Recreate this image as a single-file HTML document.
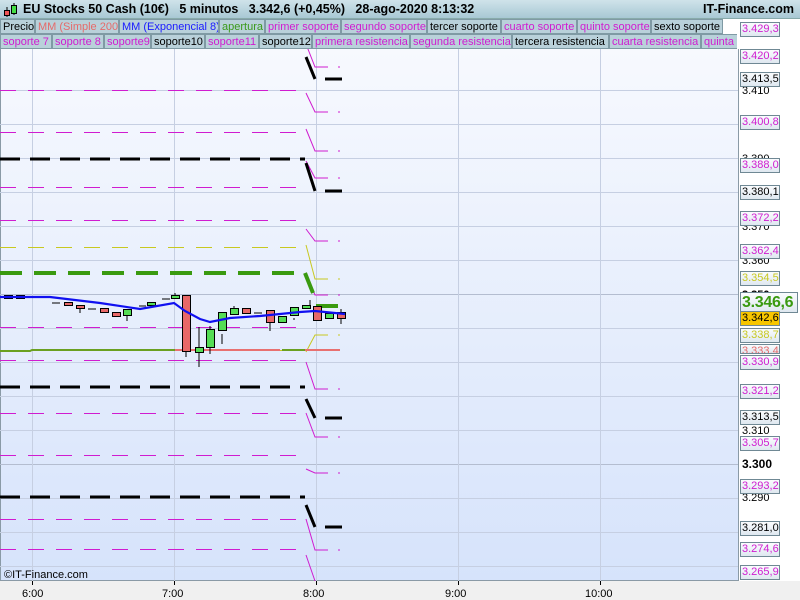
<!DOCTYPE html>
<html><head><meta charset="utf-8"><style>
*{margin:0;padding:0;box-sizing:border-box}
body{width:800px;height:600px;overflow:hidden;position:relative;font-family:"Liberation Sans",sans-serif;background:#fff}
#title{position:absolute;left:0;top:0;width:800px;height:19px;background:linear-gradient(#cfe3ea,#a8c8d4);border-bottom:1px solid #8aa;font-weight:bold;font-size:12.5px;line-height:19px}
.row{position:absolute;left:0;height:15px;font-size:11px;line-height:14px}
.c{position:absolute;top:0;height:15px;background:#b9d1da;border:1px solid #7f9aa4;padding-left:2px;white-space:nowrap;overflow:hidden}
.m{color:#d01cd0}.k{color:#000}
.lab{position:absolute;left:740px;width:40px;height:15px;border:1px solid #6f8894;background:linear-gradient(#fafcfe,#dfe8f0);font-size:11px;line-height:13px;padding-left:1px;white-space:nowrap}
.ax{position:absolute;left:742px;font-size:11px;line-height:12px;color:#000}
</style></head><body>
<div id="title"><svg style="position:absolute;left:3px;top:2px" width="16" height="16"><line x1="4" y1="5" x2="4" y2="15" stroke="#000"/><rect x="1.5" y="8.5" width="5" height="5" fill="#e55" stroke="#000"/><line x1="11" y1="1" x2="11" y2="13" stroke="#000"/><rect x="8.5" y="3.5" width="5" height="8" fill="#4d4" stroke="#000"/></svg><span style="position:absolute;left:23px">EU Stocks 50 Cash (10€)&nbsp;&nbsp;&nbsp;5 minutos&nbsp;&nbsp;&nbsp;3.342,6 (+0,45%)&nbsp;&nbsp;&nbsp;28-ago-2020 8:13:32</span><span style="position:absolute;right:6px">IT-Finance.com</span></div>
<div class="row" style="top:19px">
<div class="c k" style="left:0;width:35px">Precio</div>
<div class="c" style="left:35px;width:84px;color:#e56a6a">MM (Simple 200)</div>
<div class="c" style="left:119px;width:100px;color:#1a1aff">MM (Exponencial 8)</div>
<div class="c" style="left:219px;width:46px;color:#3a9a1a">apertura</div>
<div class="c m" style="left:265px;width:76px">primer soporte</div>
<div class="c m" style="left:341px;width:86px">segundo soporte</div>
<div class="c k" style="left:427px;width:74px">tercer soporte</div>
<div class="c m" style="left:501px;width:76px">cuarto soporte</div>
<div class="c m" style="left:577px;width:74px">quinto soporte</div>
<div class="c k" style="left:651px;width:72px">sexto soporte</div>
</div>
<div class="row" style="top:34px;width:737px;overflow:hidden">
<div class="c m" style="left:0;width:52px">soporte 7</div>
<div class="c m" style="left:52px;width:52px">soporte 8</div>
<div class="c m" style="left:104px;width:47px">soporte9</div>
<div class="c k" style="left:151px;width:54px">soporte10</div>
<div class="c m" style="left:205px;width:54px">soporte11</div>
<div class="c k" style="left:259px;width:53px">soporte12</div>
<div class="c m" style="left:312px;width:98px">primera resistencia</div>
<div class="c m" style="left:410px;width:102px">segunda resistencia</div>
<div class="c k" style="left:512px;width:97px">tercera resistencia</div>
<div class="c m" style="left:609px;width:92px">cuarta resistencia</div>
<div class="c m" style="left:701px;width:40px">quinta resistencia</div>
</div>
<svg style="position:absolute;left:0;top:49px" width="800" height="551">
<defs><linearGradient id="bg" x1="0" y1="0" x2="0" y2="1"><stop offset="0" stop-color="#f7f9fe"/><stop offset="1" stop-color="#d6e3fb"/></linearGradient></defs>
<rect x="0" y="0" width="738" height="532" fill="url(#bg)"/>
<rect x="738" y="0" width="62" height="532" fill="#fff"/>
<line x1="738.5" y1="0" x2="738.5" y2="532" stroke="#8a9aa6"/>
<line x1="0.5" y1="0" x2="0.5" y2="532" stroke="#8a9aa6"/>
<rect x="0" y="532" width="800" height="19" fill="#f0f0f0"/>
<line x1="0" y1="531.5" x2="738" y2="531.5" stroke="#8a9aa6"/>
<g stroke="#c6cfe2" stroke-width="1">
<line x1="0" y1="41.5" x2="738" y2="41.5"/><line x1="0" y1="75.5" x2="738" y2="75.5"/><line x1="0" y1="109.5" x2="738" y2="109.5"/><line x1="0" y1="143.5" x2="738" y2="143.5"/><line x1="0" y1="177.5" x2="738" y2="177.5"/><line x1="0" y1="211.5" x2="738" y2="211.5"/><line x1="0" y1="245.5" x2="738" y2="245.5" stroke="#b4bdd0"/><line x1="0" y1="279.5" x2="738" y2="279.5"/><line x1="0" y1="313.5" x2="738" y2="313.5"/><line x1="0" y1="347.5" x2="738" y2="347.5"/><line x1="0" y1="381.5" x2="738" y2="381.5"/><line x1="0" y1="415.5" x2="738" y2="415.5" stroke="#b4bdd0"/><line x1="0" y1="449.5" x2="738" y2="449.5"/><line x1="0" y1="483.5" x2="738" y2="483.5"/><line x1="0" y1="517.5" x2="738" y2="517.5"/>
<line x1="32.5" y1="0" x2="32.5" y2="532"/><line x1="174.5" y1="0" x2="174.5" y2="532"/><line x1="316.5" y1="0" x2="316.5" y2="532"/><line x1="458.5" y1="0" x2="458.5" y2="532"/><line x1="600.5" y1="0" x2="600.5" y2="532"/>
</g>
<g fill="none" stroke-width="1">
<g stroke="#d01cd0" stroke-dasharray="16,12">
<path d="M0 41.5H300"/><path d="M0 83.5H300"/><path d="M0 138.5H300"/><path d="M0 171.5H300"/><path d="M0 278.5H300"/><path d="M0 311.5H300"/><path d="M0 364.5H300"/><path d="M0 406.5H300"/><path d="M0 470.5H300"/><path d="M0 500.5H300"/>
</g>
<g stroke="#c8c820" stroke-dasharray="16,12"><path d="M0 198.5H300"/><path d="M0 301.5H300"/></g>
<g stroke="#d01cd0"><path d="M306 -5L315 18H328M338 18H340"/><path d="M306 44L315 63H328M338 63H340"/><path d="M306 80L315 102H328M338 102H340"/><path d="M306 112L315 129H328M338 129H340"/><path d="M306 180L315 192H328M338 192H340"/><path d="M306 226L315 246H328M338 246H340"/><path d="M306 313L315 340H328M338 340H340"/><path d="M306 364L315 388H328M338 388H340"/><path d="M306 420L315 424H328M338 424H340"/><path d="M306 470L315 501H328M338 501H340"/><path d="M306 506L315 532"/></g>
<g stroke="#c8c820"><path d="M306 196L315 230H328M338 230H340"/><path d="M306 303L315 286H328M338 286H340"/></g>
</g>
<g stroke="#000" stroke-width="3" fill="none">
<path d="M0 110H305" stroke-dasharray="20,10"/><path d="M306 8L315 30M325 30H342"/>
<path d="M306 114L315 142M325 142H342"/>
<path d="M0 338H305" stroke-dasharray="20,10"/><path d="M306 350L315 369M325 369H342"/>
<path d="M0 448H305" stroke-dasharray="20,10"/><path d="M306 456L315 478M325 478H342"/>
</g>
<path d="M0 224H305" stroke="#3a9a10" stroke-width="4" stroke-dasharray="22,12" fill="none"/>
<path d="M305 224L313 244M316 257H338" stroke="#3a9a10" stroke-width="4" fill="none"/>
<path d="M0 302H30L32 301H175" stroke="#6aa020" stroke-width="2" fill="none"/>
<path d="M175 301H280" stroke="#e87070" stroke-width="2"/><path d="M282 301H305" stroke="#6aa020" stroke-width="2"/><path d="M305 301H340" stroke="#e87070" stroke-width="2"/>
<g stroke="#000" stroke-width="1">
<path d="M80 260v4M127 263v9M151 255v4M175 244v4M186 300v8M199 278v40M210 277v28M222 285v10M234 257v3M246 260v0M270 273v9M294 269v2M310 251v5M317 265v6M341 260v15"/>
<path d="M52 254H60M88 260H96M139 257H146M162 250H170M254 264H262"/>
</g>
<g stroke="#000" stroke-width="1">
<rect x="4.5" y="246.5" width="8" height="3" fill="#5577cc"/><rect x="16.5" y="246.5" width="8" height="3" fill="#5577cc"/>
<rect x="64.5" y="253.5" width="8" height="3" fill="#e86868"/><rect x="76.5" y="256.5" width="8" height="3" fill="#e86868"/>
<rect x="100.5" y="259.5" width="8" height="4" fill="#e86868"/><rect x="112.5" y="263.5" width="8" height="4" fill="#e86868"/>
<rect x="123.5" y="260.5" width="8" height="6" fill="#55dd55"/><rect x="147.5" y="253.5" width="8" height="3" fill="#55dd55"/>
<rect x="171.5" y="246.5" width="8" height="3" fill="#55dd55"/><rect x="182.5" y="246.5" width="8" height="56" fill="#e86868"/>
<rect x="195.5" y="298.5" width="8" height="5" fill="#55dd55"/><rect x="206.5" y="280.5" width="8" height="18" fill="#55dd55"/>
<rect x="218.5" y="263.5" width="8" height="18" fill="#55dd55"/><rect x="230.5" y="259.5" width="8" height="6" fill="#55dd55"/>
<rect x="242.5" y="259.5" width="8" height="5" fill="#e86868"/><rect x="266.5" y="261.5" width="8" height="12" fill="#e86868"/>
<rect x="278.5" y="267.5" width="8" height="6" fill="#55dd55"/><rect x="290.5" y="258.5" width="8" height="8" fill="#55dd55"/>
<rect x="302.5" y="256.5" width="8" height="3" fill="#55dd55"/><rect x="313.5" y="257.5" width="8" height="14" fill="#e86868"/>
<rect x="325.5" y="264.5" width="8" height="5" fill="#55dd55"/><rect x="337.5" y="263.5" width="8" height="6" fill="#e86868"/>
</g>
<path d="M0 248L50 248L100 254L140 260L174 254L185 262L200 270L210 273L230 269L260 267L300 263L315 262L345 265" stroke="#1010f0" stroke-width="2.2" fill="none"/>
<text x="4" y="529" font-size="11" fill="#000">©IT-Finance.com</text>
<g font-size="11" fill="#000"><text x="22" y="548">6:00</text><text x="162" y="548">7:00</text><text x="303" y="548">8:00</text><text x="445" y="548">9:00</text><text x="585" y="548">10:00</text></g>
<g stroke="#000"><path d="M32.5 532v4M174.5 532v4M316.5 532v4M458.5 532v4M600.5 532v4"/></g>
</svg>
<div class="ax" style="top:85px">3.410</div>
<div class="ax" style="top:153px">3.390</div>
<div class="ax" style="top:221px">3.370</div>
<div class="ax" style="top:255px">3.360</div>
<div class="ax" style="top:289px;font-weight:bold">3.350</div>
<div class="ax" style="top:425px">3.310</div>
<div class="ax" style="top:458px;font-weight:bold;font-size:12px">3.300</div>
<div class="ax" style="top:492px">3.290</div>
<div class="lab m" style="top:22px">3.429,3</div>
<div class="lab m" style="top:49px">3.420,2</div>
<div class="lab k" style="top:72px">3.413,5</div>
<div class="lab m" style="top:115px">3.400,8</div>
<div class="lab m" style="top:158px">3.388,0</div>
<div class="lab k" style="top:185px">3.380,1</div>
<div class="lab m" style="top:211px">3.372,2</div>
<div class="lab m" style="top:244px">3.362,4</div>
<div class="lab" style="top:271px;color:#c8c820">3.354,5</div>
<div class="lab" style="top:292px;width:58px;height:21px;font-size:16px;line-height:19px;font-weight:bold;color:#3a9a10;padding-left:1px;letter-spacing:-0.3px">3.346,6</div>
<div class="lab k" style="top:311px;background:#f7c600">3.342,6</div>
<div class="lab" style="top:328px;color:#c8c820">3.338,7</div>
<div class="lab" style="top:344px;color:#e56a6a;height:10px;overflow:hidden">3.333,4</div>
<div class="lab m" style="top:355px">3.330,9</div>
<div class="lab m" style="top:384px">3.321,2</div>
<div class="lab k" style="top:410px">3.313,5</div>
<div class="lab m" style="top:436px">3.305,7</div>
<div class="lab m" style="top:479px">3.293,2</div>
<div class="lab k" style="top:521px">3.281,0</div>
<div class="lab m" style="top:542px">3.274,6</div>
<div class="lab m" style="top:565px">3.265,9</div>
</body></html>
